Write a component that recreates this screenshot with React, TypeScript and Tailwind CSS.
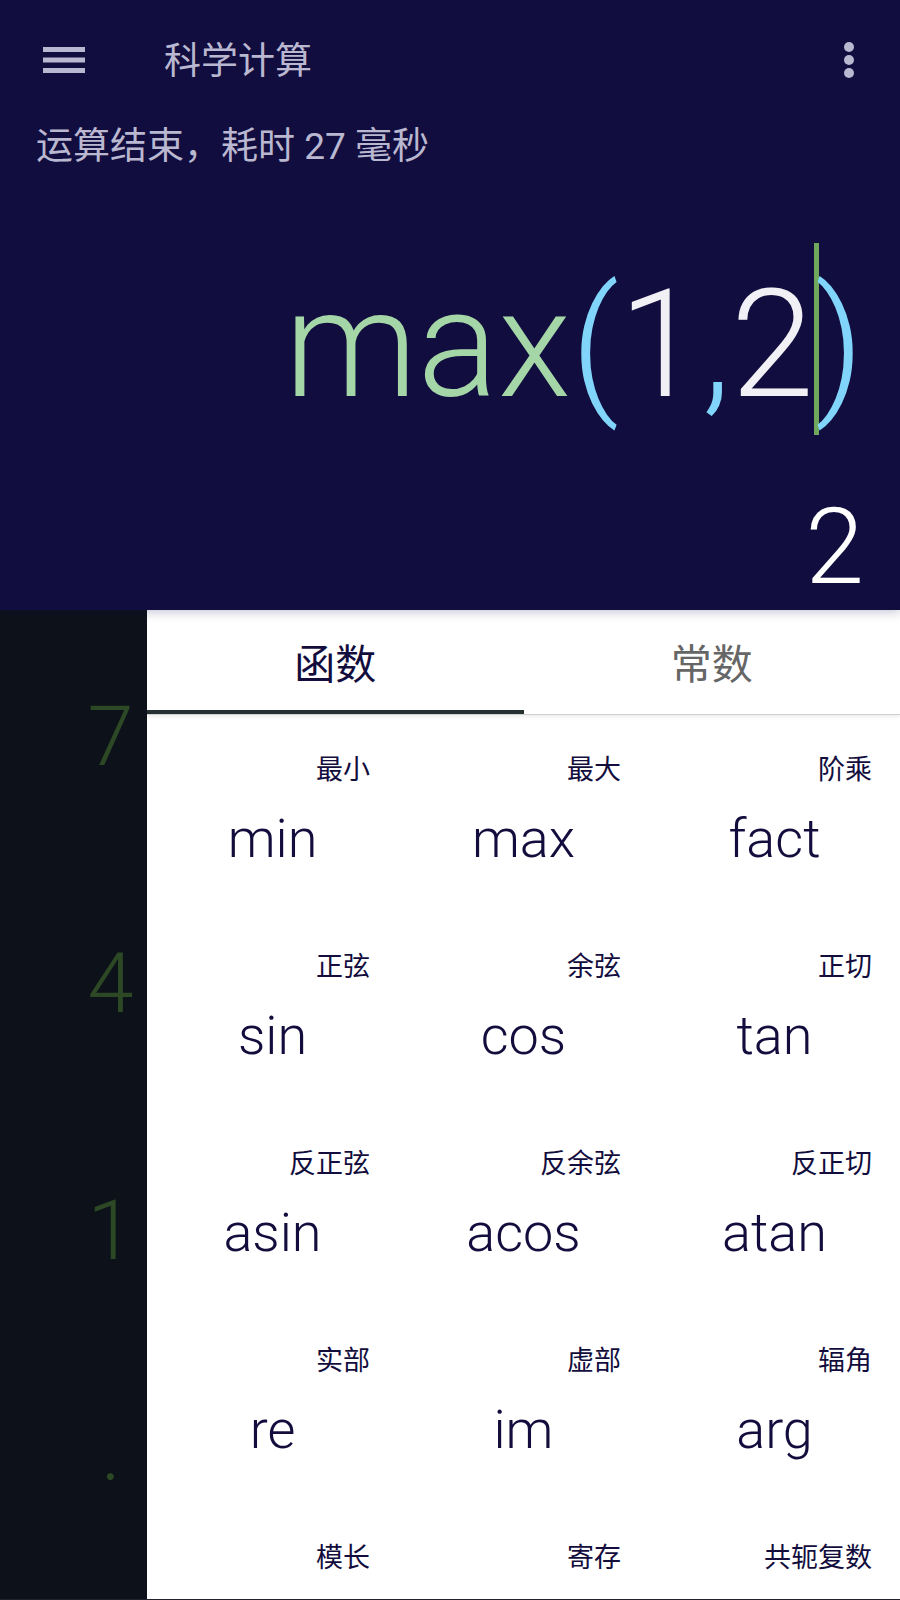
import type { ReactNode } from 'react'

interface FunctionKey {
  name?: string
  label: string
}

const FUNCTIONS: FunctionKey[] = [
  { name: 'min', label: '最小' },
  { name: 'max', label: '最大' },
  { name: 'fact', label: '阶乘' },
  { name: 'sin', label: '正弦' },
  { name: 'cos', label: '余弦' },
  { name: 'tan', label: '正切' },
  { name: 'asin', label: '反正弦' },
  { name: 'acos', label: '反余弦' },
  { name: 'atan', label: '反正切' },
  { name: 're', label: '实部' },
  { name: 'im', label: '虚部' },
  { name: 'arg', label: '辐角' },
  { label: '模长' },
  { label: '寄存' },
  { label: '共轭复数' },
]

const DIGITS = ['7', '4', '1', '·']

function Tab({ active, children }: { active?: boolean; children: ReactNode }) {
  return (
    <button
      role="tab"
      aria-selected={!!active}
      className={
        active
          ? 'flex-1 border-b-4 border-[#263032] pt-3 text-[#120d3d]'
          : 'flex-1 border-b-4 border-transparent pt-3 text-[#666666]'
      }
    >
      {children}
    </button>
  )
}

export default function App() {
  return (
    <div className="flex h-screen flex-col overflow-hidden font-[Roboto,'Noto_Sans_CJK_SC',sans-serif]">
      {/* Display */}
      <div className="relative z-10 shrink-0 bg-[#120d3f] shadow-[0_2px_10px_rgba(20,15,80,0.25)]">
        <header className="flex h-30 items-center pr-9 pl-10 text-[#bab8d0]">
          <button aria-label="菜单">
            <svg className="h-12 w-12" viewBox="0 0 48 48" fill="currentColor">
              <path d="M3 11h42v5H3zM3 21.5h42v5H3zM3 32h42v5H3z" />
            </svg>
          </button>
          <h1 className="ml-19 flex-1 pt-1 text-[37px] leading-[48px]">科学计算</h1>
          <button aria-label="更多">
            <svg className="h-12 w-8" viewBox="0 0 32 48" fill="currentColor">
              <circle cx="17" cy="11" r="5" />
              <circle cx="17" cy="24" r="5" />
              <circle cx="17" cy="37" r="5" />
            </svg>
          </button>
        </header>

        <section className="flex h-[490px] flex-col">
          <p className="px-9 pt-[3px] text-[37px] leading-[48px] text-[#bab8d0]">运算结束，耗时 27 毫秒</p>
          <div className="mt-[72px] flex items-start justify-end pr-9 text-[150px] leading-[204px] font-light">
            <span className="text-[#a5d6a7]">max</span>
            <span className="text-[#81d4fa]">(</span>
            <span className="text-[#f1f0f5]">1</span>
            <span className="text-[#81d4fa]">,</span>
            <span className="text-[#f1f0f5]">2</span>
            <span className="h-48 w-[5px] bg-[#6fa85c]" />
            <span className="-ml-1 text-[#81d4fa]">)</span>
          </div>
          <output className="mt-11 pr-9 text-right text-[106px] leading-[112px] font-light text-white">2</output>
        </section>
      </div>

      {/* Number pad with the function drawer next to it */}
      <main className="flex min-h-0 flex-1 bg-[#22222c] pb-px">
        <div className="flex w-[147px] shrink-0 flex-col overflow-hidden bg-[#0d121a]">
          {DIGITS.map((digit) => (
            <button key={digit} className="h-[247px] shrink-0 pt-2 pl-[74px] text-[83px] font-light text-[#2c4824]">
              {digit}
            </button>
          ))}
        </div>
        <div className="min-w-0 flex-1 overflow-hidden bg-white">
          <div
            role="tablist"
            className="flex h-[105px] border-b border-[#d0d0d0] text-[41px] shadow-[0_2px_4px_rgba(0,0,0,0.08)]"
          >
            <Tab active>函数</Tab>
            <Tab>常数</Tab>
          </div>
          <div className="grid grid-cols-3 pt-[23px] text-[#120d3d]">
            {FUNCTIONS.map(({ name, label }) => (
              <button key={label} className="flex h-[197px] flex-col">
                <span className="self-end pt-2 pr-7 text-[27px] leading-[48px]">{label}</span>
                {name && <span className="self-center text-[54px] leading-[90px] font-light">{name}</span>}
              </button>
            ))}
          </div>
        </div>
      </main>
    </div>
  )
}
